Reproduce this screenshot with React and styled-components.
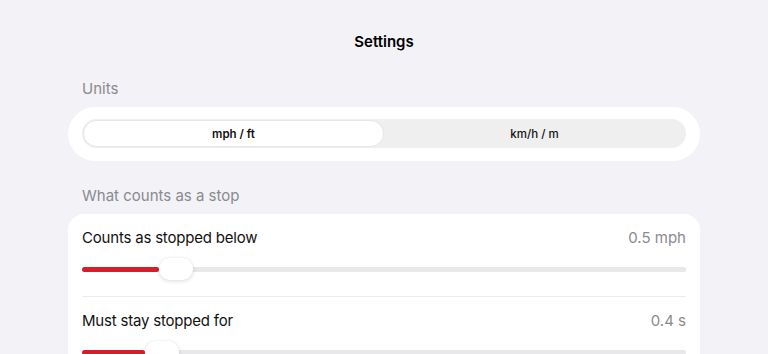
import React from "react";
import styled, { createGlobalStyle } from "styled-components";

const Global = createGlobalStyle`
  html, body { margin: 0; padding: 0; background: #f2f2f7; }
  body { font-family: Inter, "Noto Sans", "Liberation Sans", sans-serif; -webkit-font-smoothing: antialiased; }
  * { box-sizing: border-box; }
`;

const Page = styled.div`
  width: 632px;
  margin: 0 auto;
  padding-top: 32px;
  display: flex;
  flex-direction: column;
`;

const Title = styled.h1`
  margin: 0 0 28px;
  font-size: 15px;
  line-height: 20px;
  font-weight: 600;
  text-align: center;
  color: #000;
`;

const SectionHeader = styled.div`
  padding: 0 14px;
  font-size: 15px;
  line-height: 18px;
  color: #8a8a8f;
  margin-bottom: 9px;
`;

const Card = styled.div`
  background: #fff;
  border-radius: ${(p) => p.$radius}px;
  padding: ${(p) => p.$pad};
  margin-bottom: ${(p) => p.$mb || 0}px;
`;

const Segmented = styled.div`
  display: flex;
  height: 29px;
  background: #efeff0;
  border-radius: 15px;
  padding: 1px;
`;

const Segment = styled.div`
  flex: 1;
  display: flex;
  align-items: center;
  justify-content: center;
  font-size: 11.5px;
  font-weight: ${(p) => (p.$active ? 600 : 500)};
  color: #111;
  border-radius: 14px;
  background: ${(p) => (p.$active ? "#fff" : "transparent")};
  border: ${(p) => (p.$active ? "1px solid #e6e6ea" : "1px solid transparent")};
`;

const Row = styled.div`
  padding: 13px 0 16px;
  border-top: ${(p) => (p.$first ? "none" : "1px solid #ececee")};
`;

const LabelLine = styled.div`
  display: flex;
  justify-content: space-between;
  align-items: center;
  height: 20px;
  font-size: 15px;
  margin-bottom: 11px;
`;

const Label = styled.span`
  color: #111;
  letter-spacing: -0.2px;
`;

const Value = styled.span`
  color: #8a8a8f;
`;

const SliderBox = styled.div`
  position: relative;
  height: 22px;
  display: flex;
  align-items: center;
`;

const Track = styled.div`
  position: relative;
  width: 100%;
  height: 5px;
  border-radius: 3px;
  background: #e8e8ea;
`;

const Fill = styled.div`
  position: absolute;
  left: 0;
  top: 0;
  bottom: 0;
  border-radius: 3px;
  background: #d51f28;
`;

const Thumb = styled.div`
  position: absolute;
  top: 0;
  width: 34px;
  height: 22px;
  border-radius: 11px;
  background: #fff;
  box-shadow: 0 1px 4px rgba(0, 0, 0, 0.14), 0 0 1px rgba(0, 0, 0, 0.08);
`;

function Slider({ fill }) {
  return (
    <SliderBox>
      <Track>
        <Fill style={{ width: fill }} />
      </Track>
      <Thumb style={{ left: fill }} />
    </SliderBox>
  );
}

export default function App() {
  return (
    <>
      <Global />
      <Page>
        <Title>Settings</Title>
        <SectionHeader>Units</SectionHeader>
        <Card $radius={27} $pad="12px 14px 13px" $mb={26}>
          <Segmented>
            <Segment $active>mph / ft</Segment>
            <Segment>km/h / m</Segment>
          </Segmented>
        </Card>
        <SectionHeader>What counts as a stop</SectionHeader>
        <Card $radius={16} $pad="0 14px">
          <Row $first>
            <LabelLine>
              <Label>Counts as stopped below</Label>
              <Value>0.5 mph</Value>
            </LabelLine>
            <Slider fill={77} />
          </Row>
          <Row>
            <LabelLine>
              <Label>Must stay stopped for</Label>
              <Value>0.4 s</Value>
            </LabelLine>
            <Slider fill={63} />
          </Row>
        </Card>
      </Page>
    </>
  );
}
